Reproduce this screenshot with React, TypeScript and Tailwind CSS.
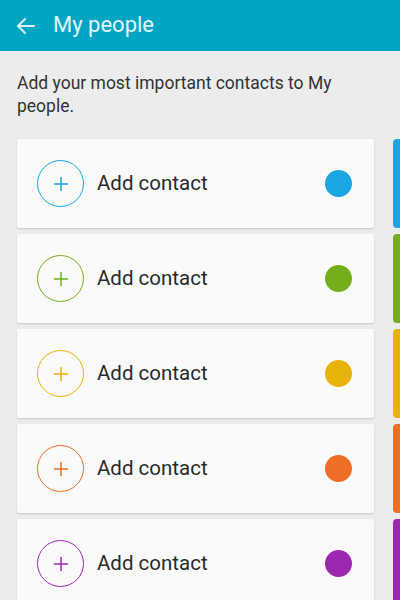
import React from "react";

const items = [
  { c: "#1aa6e1" },
  { c: "#74ae1c" },
  { c: "#e9b208" },
  { c: "#ef6d25" },
  { c: "#9d28b0" },
];

export default function App() {
  return (
    <div className="w-[400px] h-[600px] overflow-hidden bg-[#ececec]" style={{ fontFamily: "Roboto, 'Noto Sans', sans-serif" }}>
      <div className="h-[51px] bg-[#00a5c4] flex items-center">
        <svg className="ml-[16px]" width="20" height="20" viewBox="0 0 20 20" fill="none" stroke="#d8f3f7" strokeWidth="2" strokeLinecap="round" strokeLinejoin="round">
          <path d="M2 10 H18" />
          <path d="M9 3 L2 10 L9 17" />
        </svg>
        <div className="ml-[17px] text-[22px] text-[#e3f7fa] leading-none -mt-[2px]">My people</div>
      </div>
      <div className="px-[17px] pt-[21px] max-w-[360px] text-[17.5px] leading-[23px] text-[#333333]">
        Add your most important contacts to My people.
      </div>
      <div className="mt-[21px] flex flex-col gap-[6px]">
        {items.map((it, i) => (
          <div key={i} className="flex items-stretch h-[89px]">
            <div className="ml-[17px] w-[357px] bg-[#fafafa] rounded-[2px] shadow-[0_1px_2px_rgba(0,0,0,0.15)] flex items-center">
              <div
                className="ml-[20px] w-[47px] h-[47px] rounded-full border-[1.5px] flex items-center justify-center"
                style={{ borderColor: it.c }}
              >
                <svg width="16" height="16" viewBox="0 0 16 16" stroke={it.c} strokeWidth="1.5" strokeLinecap="round">
                  <path d="M8 1.5 V14.5 M1.5 8 H14.5" />
                </svg>
              </div>
              <div className="ml-[13px] text-[20.5px] text-[#2a2a2a] flex-1">Add contact</div>
              <div className="mr-[22px] w-[27px] h-[27px] rounded-full" style={{ backgroundColor: it.c }} />
            </div>
            <div className="ml-[19px] flex-1 rounded-l-[4px]" style={{ backgroundColor: it.c }} />
          </div>
        ))}
      </div>
    </div>
  );
}
